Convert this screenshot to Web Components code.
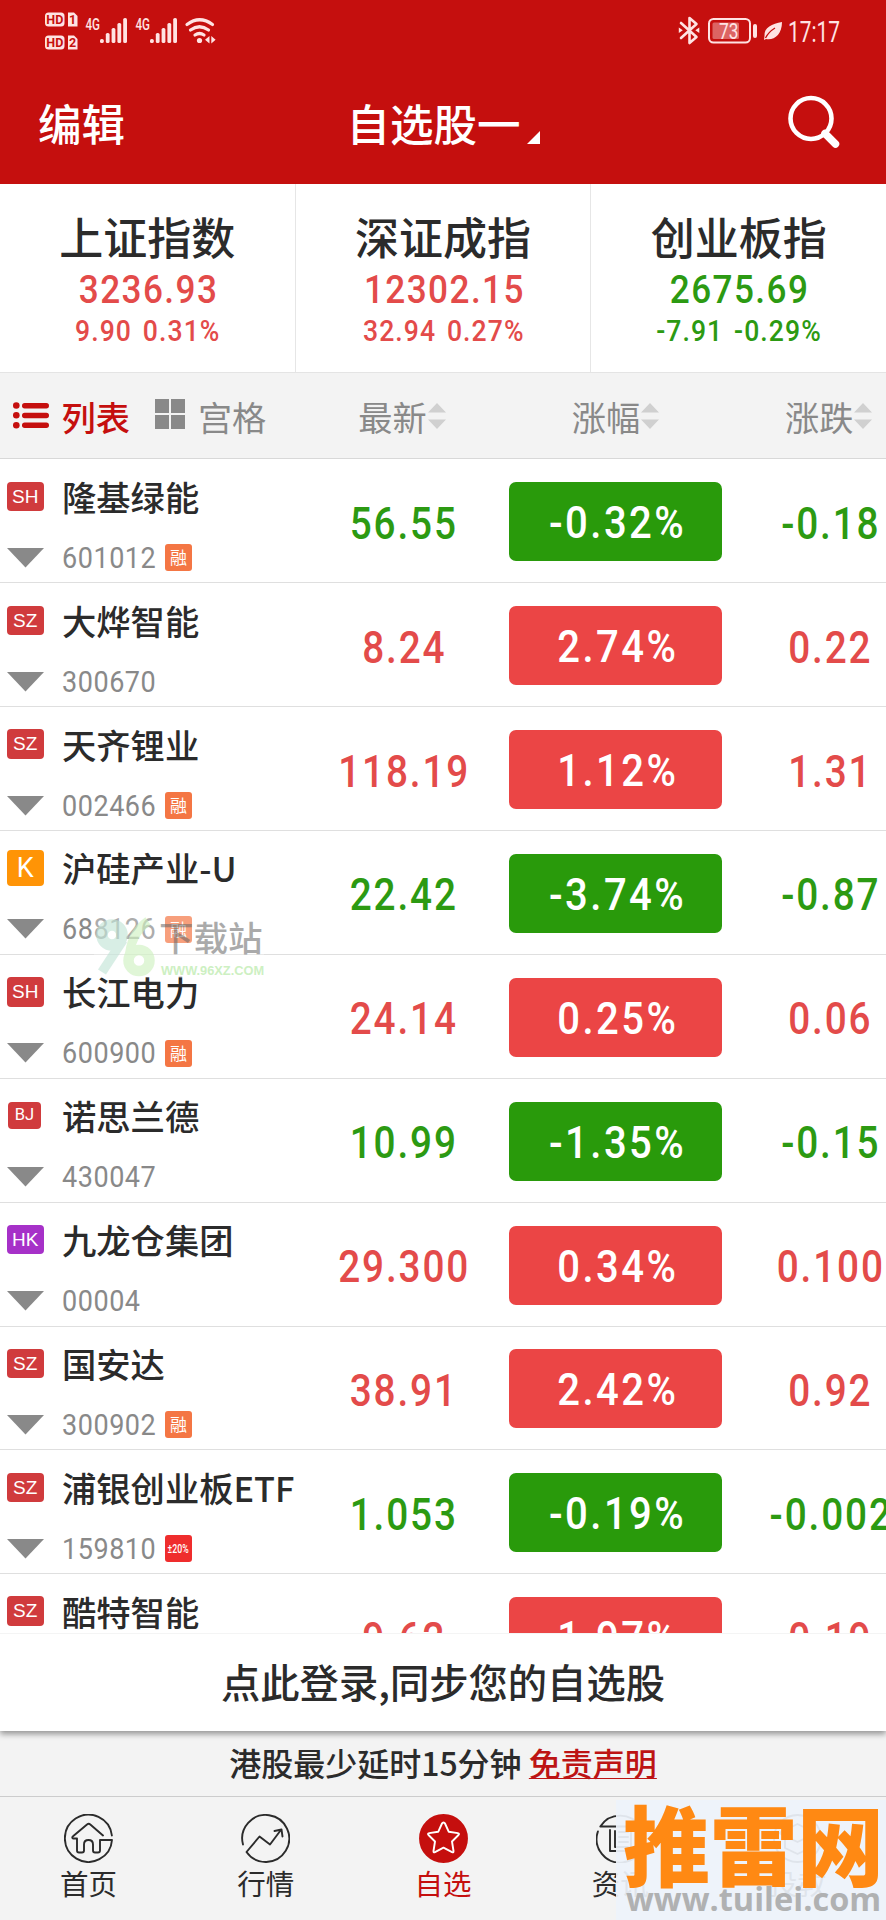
<!DOCTYPE html>
<html lang="zh-CN">
<head>
<meta charset="UTF-8">
<title>自选股</title>
<style>
    body {
        margin: 0;
        width: 886px;
        height: 1920px;
        overflow: hidden;
        font-family: "Noto Sans CJK SC", sans-serif;
        color: #2b2b2b;
        --red: #c50f0e;
        --up: #e34b4a;
        --down: #2c9a12;
        --up-fill: #eb4545;
        --down-fill: #299a0b;
        --grey: #898989;
        --panel: #f3f3f3;
        --num: Roboto, "Noto Sans CJK SC", sans-serif;
    }
</style>
</head>
<body>
<stock-app></stock-app>

<script>
class BaseElement extends HTMLElement {
    connectedCallback() {
        if (this.shadowRoot) return;
        const template = document.createElement('template');
        template.innerHTML = this.template();
        this.attachShadow({mode: 'open'}).append(template.content.cloneNode(true));
    }

    attr(name) {
        return this.getAttribute(name) || '';
    }
}

customElements.define('status-bar', class extends BaseElement {
    template() {
        const bars = [4, 10, 15, 20, 25].map((h, i) =>
            `<rect x="${i * 5.8}" y="${25 - h}" width="3.8" height="${h}" rx="1.6"/>`).join('');
        return `
            <style>
                :host { display: flex; height: 61px; color: #ffe3e3; }
                svg { display: block; fill: currentColor; }
                text { font-family: Roboto, sans-serif; }
            </style>
            <svg width="886" height="61" viewBox="0 0 886 61">
                <rect x="45" y="12.500" width="19.500" height="14" rx="3.500"/>
                <path d="M68 12.500h6l3.500 3.500v10.500h-9.500z"/>
                <rect x="45" y="35.500" width="19.500" height="14" rx="3.500"/>
                <path d="M68 35.500h6l3.500 3.500v10.500h-9.500z"/>
                <g font-size="12.500" font-weight="700" fill="#c50f0e">
                    <text x="46.300" y="24" textLength="17">HD</text>
                    <text x="69" y="24">1</text>
                    <text x="46.300" y="47" textLength="17">HD</text>
                    <text x="69" y="47">2</text>
                </g>
                <g font-size="16.500" font-weight="500">
                    <text x="85.500" y="29.500" textLength="14.500" lengthAdjust="spacingAndGlyphs">4G</text>
                    <text x="135.500" y="29.500" textLength="14.500" lengthAdjust="spacingAndGlyphs">4G</text>
                </g>
                <g transform="translate(100 18)">${bars}</g>
                <g transform="translate(150 18)">${bars}</g>
                <g fill="none" stroke="currentColor" stroke-width="3.200" stroke-linecap="round">
                    <path d="M187 24.500q12.500-9.500 25.500 0"/>
                    <path d="M190.500 30q9-6.500 18 0"/>
                    <path d="M195 35q4.500-3 9 0"/>
                </g>
                <circle cx="199.500" cy="40.500" r="2.600"/>
                <path d="M209.500 36v7.500l-4.500-3.700zM211.300 36v7.500l4.300-3.700z"/>
                <g fill="none" stroke="currentColor" stroke-width="2.600" stroke-linejoin="round" stroke-linecap="round">
                    <path d="M681 23l15.500 14-7 6V18l7 6-15.500 14"/>
                </g>
                <path d="M678.800 27.500l4 2.800-4 2.800zM699.300 27.500l-4 2.800 4 2.800z"/>
                <rect x="709" y="19" width="41" height="23.500" rx="4.500" fill="none" stroke="currentColor" stroke-width="2"/>
                <rect x="712.500" y="22.500" width="26.500" height="16.500" rx="1.500" opacity=".4"/>
                <text x="719" y="38.500" font-size="22" textLength="19.500" lengthAdjust="spacingAndGlyphs">73</text>
                <rect x="753" y="24" width="4" height="14" rx="2"/>
                <path d="M782 22c-10 2-18 5-17.500 14l-.500 4 2-1c8 1.500 16-4 16-17z"/>
                <path d="M765.500 38q3-6 9.500-10" fill="none" stroke="#c50f0e" stroke-width="1.300"/>
                <text x="788" y="42" font-size="29" textLength="52" lengthAdjust="spacingAndGlyphs">17:17</text>
            </svg>
        `;
    }
});

customElements.define('app-header', class extends BaseElement {
    template() {
        return `
            <style>
                :host {
                    display: grid;
                    grid-template-columns: 1fr auto 1fr;
                    align-items: center;
                    height: 123.300px;
                    padding: 0 45px 0 38px;
                    box-sizing: border-box;
                    color: #fff;
                    font-size: 43.500px;
                    font-weight: 500;
                    line-height: 60px;
                }
                .title { display: flex; align-items: flex-end; gap: 6px; padding-left: 7px; }
                .title svg { margin-bottom: 9px; }
                .edit, .title { margin-top: 1px; }
                .search { justify-self: end; margin-bottom: 1px; }
                svg { display: block; }
            </style>
            <div class="edit"><slot name="action"></slot></div>
            <div class="title">
                <slot></slot>
                <svg width="13" height="13"><path d="M0 13L13 0v13z" fill="#fff"/></svg>
            </div>
            <svg class="search" width="54" height="56" fill="none" stroke="#fff">
                <circle cx="24" cy="24.500" r="20.500" stroke-width="4.600"/>
                <path d="M38 39.500L48.500 50" stroke-width="7.500" stroke-linecap="round"/>
            </svg>
        `;
    }
});

customElements.define('index-card', class extends BaseElement {
    template() {
        return `
            <style>
                :host {
                    display: flex;
                    flex-direction: column;
                    align-items: center;
                    flex: 1;
                    height: 187.700px;
                    padding-top: 24px;
                    box-sizing: border-box;
                    border-right: 1.500px solid #e6e6e6;
                    color: var(--up);
                    font-family: var(--num);
                }
                :host([down]) { color: var(--down); }
                :host(:last-child) { border-right: 0; }
                .name { font: 500 44px/56px "Noto Sans CJK SC", sans-serif; color: #2b2b2b; }
                .value, .diff { font-weight: 500; transform: scaleX(.9); }
                .value { font-size: 39px; line-height: 46px; letter-spacing: 1.600px; margin: 3px 0 0 2px; }
                .diff { display: flex; gap: 12px; font-size: 29.500px; line-height: 36px; letter-spacing: 1.200px; margin-left: 1px; }
            </style>
            <div class="name"><slot></slot></div>
            <div class="value">${this.attr('value')}</div>
            <div class="diff"><span>${this.attr('diff')}</span><span>${this.attr('percent')}</span></div>
        `;
    }
});

customElements.define('sort-label', class extends BaseElement {
    template() {
        return `
            <style>
                :host { display: flex; align-items: center; justify-content: center; gap: 1px; }
                svg { display: block; fill: #d0d0d0; }
            </style>
            <slot></slot>
            <svg width="18" height="26"><path d="M0 9.500L9 0l9 9.500zM0 16.500h18L9 26z"/></svg>
        `;
    }
});

customElements.define('list-toolbar', class extends BaseElement {
    template() {
        return `
            <style>
                :host {
                    display: grid;
                    grid-template-columns: 295.300px repeat(3, 213.400px);
                    align-items: center;
                    height: 87.500px;
                    box-sizing: border-box;
                    background: var(--panel);
                    border-top: 1px solid #e4e4e4;
                    border-bottom: 1px solid #d8d8d8;
                    color: var(--grey);
                    font-size: 34.200px;
                    line-height: 50px;
                }
                .views { display: flex; align-items: center; padding-left: 13px; }
                .views span { margin-left: 12.500px; }
                .on { color: var(--red); font-weight: 500; }
                .grid { margin: 0 0 3px 25.500px; }
                svg { display: block; }
            </style>
            <div class="views">
                <svg width="36" height="27" fill="#c50f0e">
                    <circle cx="3.300" cy="3.500" r="3.300"/><circle cx="3.300" cy="13.300" r="3.300"/><circle cx="3.300" cy="23.200" r="3.300"/>
                    <rect x="9" y="1" width="27" height="5.500" rx="2.700"/><rect x="9" y="10.800" width="27" height="5.500" rx="2.700"/><rect x="9" y="20.500" width="27" height="5.500" rx="2.700"/>
                </svg>
                <span class="on">列表</span>
                <svg class="grid" width="30" height="30" fill="#898989"><path d="M0 0h14v14H0zM16 0h14v14H16zM0 16h14v14H0zM16 16h14v14H16z"/></svg>
                <span>宫格</span>
            </div>
            <sort-label>最新</sort-label>
            <sort-label>涨幅</sort-label>
            <sort-label>涨跌</sort-label>
        `;
    }
});

customElements.define('stock-row', class extends BaseElement {
    template() {
        const tag = this.attr('tag');
        const market = this.attr('market');
        return `
            <style>
                :host {
                    display: grid;
                    grid-template-columns: 295.300px repeat(3, 213.400px);
                    flex: none;
                    height: 123.870px;
                    box-sizing: border-box;
                    border-bottom: 1.500px solid #dfdfdf;
                    align-items: center;
                    color: var(--up);
                    --fill: var(--up-fill);
                }
                :host([down]) { color: var(--down); --fill: var(--down-fill); }
                .info {
                    display: grid;
                    grid-template-columns: 36.500px auto;
                    grid-template-rows: 50px 34px;
                    row-gap: 19px;
                    column-gap: 18.500px;
                    padding: 5px 0 0 7px;
                    align-items: center;
                    white-space: nowrap;
                }
                .market {
                    height: 29.500px;
                    margin-top: -1px;
                    border-radius: 4px;
                    background: #d03b3d;
                    color: #fff;
                    font: 19px/30px "Liberation Sans", sans-serif;
                    text-align: center;
                }
                .market.K { height: 36.500px; background: #ff9406; font: 27px/36.500px Roboto, sans-serif; }
                .market.HK { background: #a631c8; }
                .market.BJ { width: 33px; height: 27px; margin-left: 1px; font: 16.500px/25px Roboto, sans-serif; }
                .name { font-size: 34.300px; font-weight: 500; line-height: 49px; margin-top: -1px; color: #2b2b2b; }
                .arrow { display: block; }
                .code { display: flex; align-items: center; gap: 11px; color: var(--grey); font: 30px/34px var(--num); }
                .code > span:first-child { width: 92px; letter-spacing: .600px; transform: scaleX(.9); transform-origin: left; }
                .tag {
                    width: 27px;
                    height: 27px;
                    border-radius: 3px;
                    background: #f47644;
                    color: #fff;
                    text-align: center;
                    font: 17px/26px "Noto Sans CJK SC", sans-serif;
                }
                .tag.limit { display: flex; justify-content: center; background: #ef2d2d; font: 500 12.500px/27px Roboto, sans-serif; }
                .tag.limit span { transform: scaleX(.7); }
                .num { font: 500 43.500px/50px var(--num); text-align: center; white-space: nowrap; margin-top: 2px; }
                .num span { display: inline-block; transform: translate(1px, 3px) scaleX(.89); letter-spacing: 2.100px; margin-right: -2.100px; }
                .pct {
                    height: 79px;
                    line-height: 79px;
                    border-radius: 7px;
                    background: var(--fill);
                    color: #fff;
                }
                .pct span { transform: translate(1px, 2px) scaleX(.92); letter-spacing: 2.700px; margin-right: -2.700px; }
            </style>
            <div class="info">
                <div class="market ${market}">${market}</div>
                <div class="name">${this.attr('name')}</div>
                <svg class="arrow" width="37" height="20"><path d="M0 0h37L18.500 19.500z" fill="#898989"/></svg>
                <div class="code"><span>${this.attr('code')}</span>${tag ? `<div class="tag ${tag === '融' ? '' : 'limit'}"><span>${tag}</span></div>` : ''}</div>
            </div>
            <div class="num"><span>${this.attr('price')}</span></div>
            <div class="num pct"><span>${this.attr('percent')}</span></div>
            <div class="num"><span>${this.attr('diff')}</span></div>
        `;
    }
});

const NAV_ICONS = {
    home: `<path d="M47.900 21.500A23.600 23.600 0 1 0 48 26H36v10.500q0 2-2 2h-3q-2 0-2-2v-6q0-4.500-4.500-4.500t-4.500 4.500v6q0 2-2 2h-3q-2 0-2-2V24.500H9q-1.500-1 0-2.200L23 10.500q1.700-1.300 3.300 0L39 21.500"/>`,
    chart: `<path d="M2 30.500A23.500 23.500 0 1 1 5.500 38L18.500 22.500l10.500 8L39.500 16.500M33.500 17l7-1.500 1 7"/>`,
    star: `<circle cx="24.500" cy="24.500" r="23.500" fill="#c50f0e" stroke="#c50f0e"/><path stroke="#fff" d="M24.500 8.500q1 0 1.500 1l3.800 8.300 9 1.300q2 .4.700 1.900L33 27.500l1.500 9.500q.2 1.900-1.500 1.100L24.500 33.700l-8.500 4.400q-1.700.8-1.500-1.100L16 27.500 9.500 21q-1.300-1.500.7-1.900l9-1.300L23 9.500q.5-1 1.500-1z"/>`,
    news: `<path d="M38 12.500H4.300A23.500 23.500 0 1 1 1.900 17.500M14 16v21h21V17M19 17v16M23 18h9M23 23h9M23 28h9M19 33h13"/>`,
    learn: `<circle cx="24.500" cy="24.500" r="23.500"/><path d="M6 19l18.500-9L43 19l-18.500 9zM12 23v11l12.500 6L37 34V23"/>`
};

customElements.define('nav-item', class extends BaseElement {
    template() {
        return `
            <style>
                :host {
                    display: flex;
                    flex-direction: column;
                    align-items: center;
                    flex: 1;
                    padding-top: 17px;
                    font-size: 28.500px;
                    line-height: 39px;
                }
                :host([active]) { color: var(--red); }
                svg { display: block; fill: none; stroke: currentColor; stroke-width: 1.900; stroke-linejoin: round; stroke-linecap: round; }
            </style>
            <svg width="49" height="49">${NAV_ICONS[this.attr('icon')]}</svg>
            <slot></slot>
        `;
    }
});

customElements.define('site-mark', class extends BaseElement {
    template() {
        return `
            <style>
                :host { position: absolute; left: 94px; top: 914px; display: flex; gap: 3px; background: rgba(255, 255, 255, .3); }
                svg { display: block; }
                .words { display: flex; flex-direction: column; }
                .cn { font-size: 34.500px; font-weight: 500; line-height: 45px; height: 49px; color: #666; opacity: .55; }
                .url { margin-left: 2px; font: 700 12.800px/15px "Liberation Sans", sans-serif; color: #cdf0c2; }
            </style>
            <svg width="62" height="64" fill="none" opacity=".6">
                <g stroke="#bfe3d5">
                    <circle cx="18" cy="21" r="10" stroke-width="11.500"/>
                    <path d="M29 26L8 58" stroke-width="9.500"/>
                </g>
                <g stroke="#cdf1bd">
                    <path d="M54 7Q36 20 35 46" stroke-width="9"/>
                    <circle cx="45" cy="46.500" r="10.500" stroke-width="10.500"/>
                </g>
            </svg>
            <div class="words">
                <span class="cn">下载站</span>
                <span class="url">WWW.96XZ.COM</span>
            </div>
        `;
    }
});

customElements.define('corner-mark', class extends BaseElement {
    template() {
        return `
            <style>
                :host {
                    position: absolute;
                    left: 616px;
                    top: 1800px;
                    width: 270px;
                    height: 120px;
                    background: rgba(237, 242, 250, .93);
                    white-space: nowrap;
                }
                .cn { margin-left: 7px; height: 81px; font-size: 87px; font-weight: 900; line-height: 85px; color: #ff8913; }
                .url { margin-left: 10px; font: 700 32.500px/36px "Open Sans", sans-serif; color: #b0b1b2; }
            </style>
            <div class="cn">推雷网</div>
            <div class="url">www.tuilei.com</div>
        `;
    }
});

const STOCKS = [
    ['SH', '隆基绿能', '601012', '融', '56.55', '-0.32%', '-0.18'],
    ['SZ', '大烨智能', '300670', '', '8.24', '2.74%', '0.22'],
    ['SZ', '天齐锂业', '002466', '融', '118.19', '1.12%', '1.31'],
    ['K', '沪硅产业-U', '688126', '融', '22.42', '-3.74%', '-0.87'],
    ['SH', '长江电力', '600900', '融', '24.14', '0.25%', '0.06'],
    ['BJ', '诺思兰德', '430047', '', '10.99', '-1.35%', '-0.15'],
    ['HK', '九龙仓集团', '00004', '', '29.300', '0.34%', '0.100'],
    ['SZ', '国安达', '300902', '融', '38.91', '2.42%', '0.92'],
    ['SZ', '浦银创业板ETF', '159810', '±20%', '1.053', '-0.19%', '-0.002'],
    ['SZ', '酷特智能', '300840', '', '9.62', '1.97%', '0.19']
];

customElements.define('stock-app', class extends BaseElement {
    template() {
        const rows = STOCKS.map(([market, name, code, tag, price, percent, diff]) => `
            <stock-row market="${market}" name="${name}" code="${code}" tag="${tag}"
                price="${price}" percent="${percent}" diff="${diff}" ${diff.startsWith('-') ? 'down' : ''}></stock-row>
        `).join('');

        return `
            <style>
                :host {
                    display: flex;
                    flex-direction: column;
                    position: relative;
                    width: 886px;
                    height: 1920px;
                    overflow: hidden;
                    background: #fff;
                }
                .top { background: var(--red); }
                .indexes { display: flex; }
                .list { display: flex; flex-direction: column; flex: 1; min-height: 0; overflow: hidden; }
                .login {
                    height: 98px;
                    box-sizing: border-box;
                    border-top: 1px solid #f4f4f4;
                    background: #fff;
                    box-shadow: 0 3px 6px rgba(0, 0, 0, .4);
                    font-size: 39.300px;
                    font-weight: 500;
                    line-height: 93px;
                    text-align: center;
                    position: relative;
                    clip-path: inset(0 0 -12px 0);
                    flex: none;
                }
                .notice {
                    height: 65.500px;
                    box-sizing: border-box;
                    background: var(--panel);
                    border-bottom: 1.500px solid #ccc;
                    font-size: 32px;
                    font-weight: 500;
                    line-height: 63px;
                    text-align: center;
                    flex: none;
                }
                .notice span { color: #bd1414; text-decoration: underline; text-decoration-thickness: 1px; text-underline-offset: 2px; text-decoration-skip-ink: none; }
                .nav { display: flex; height: 123.500px; flex: none; background: var(--panel); }
            </style>
            <div class="top">
                <status-bar></status-bar>
                <app-header><span slot="action">编辑</span>自选股一</app-header>
            </div>
            <div class="indexes">
                <index-card value="3236.93" diff="9.90" percent="0.31%">上证指数</index-card>
                <index-card value="12302.15" diff="32.94" percent="0.27%">深证成指</index-card>
                <index-card value="2675.69" diff="-7.91" percent="-0.29%" down>创业板指</index-card>
            </div>
            <list-toolbar></list-toolbar>
            <div class="list">${rows}</div>
            <div class="login">点此登录,同步您的自选股</div>
            <div class="notice">港股最少延时15分钟 <span>免责声明</span></div>
            <div class="nav">
                <nav-item icon="home">首页</nav-item>
                <nav-item icon="chart">行情</nav-item>
                <nav-item icon="star" active>自选</nav-item>
                <nav-item icon="news">资讯</nav-item>
                <nav-item icon="learn">投教</nav-item>
            </div>
            <site-mark></site-mark>
            <corner-mark></corner-mark>
        `;
    }
});
</script>
</body>
</html>
